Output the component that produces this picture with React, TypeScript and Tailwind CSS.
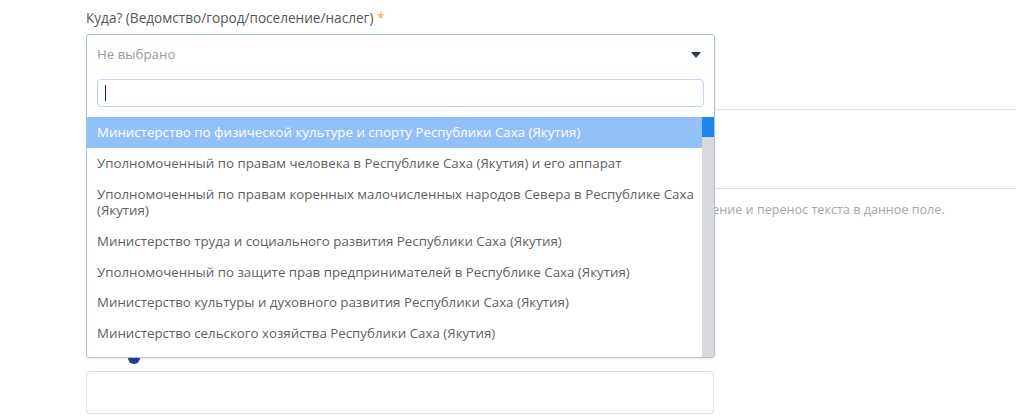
import { useState } from 'react';

const options = [
  'Министерство по физической культуре и спорту Республики Саха (Якутия)',
  'Уполномоченный по правам человека в Республике Саха (Якутия) и его аппарат',
  'Уполномоченный по правам коренных малочисленных народов Севера в Республике Саха (Якутия)',
  'Министерство труда и социального развития Республики Саха (Якутия)',
  'Уполномоченный по защите прав предпринимателей в Республике Саха (Якутия)',
  'Министерство культуры и духовного развития Республики Саха (Якутия)',
  'Министерство сельского хозяйства Республики Саха (Якутия)',
  'Министерство строительства Республики Саха (Якутия)',
];

export default function App() {
  const [active, setActive] = useState(0);

  return (
    <div className="relative w-[1016px] h-[419px] overflow-hidden bg-white font-['Open_Sans',sans-serif] text-[13.3px] text-[#666]">
      <div className="pl-[86px] pt-[8px]">
        <label className="block leading-5 text-[13.6px] text-[#555]">
          Куда? (Ведомство/город/поселение/наслег) <span className="text-[#f0a64a]">*</span>
        </label>
        <div className="mt-[6px] w-[628px] h-[40px] rounded-[3px] border border-[#d5dde5]" />
      </div>

      {/* content under the dropdown */}
      <div className="mt-[35px] ml-[86px] border-t border-[#e2e2e2]" />
      <div className="h-[78px]" />
      <div className="ml-[86px] border-t border-[#e2e2e2]" />
      <p className="pl-[86px] pt-[11px] text-[12.6px] leading-5 text-[#a6a6a6] whitespace-nowrap">
        Можно указать несколько адресов через запятую. Разрешено форматирование, копирование, выделение и перенос текста в данное поле.
      </p>
      <div className="mt-[132px] pl-[128px] h-[18px]">
        <div className="w-[12px] h-[12px] rounded-full bg-[#1d3f9a]" />
      </div>
      <div className="ml-[86px] mt-[1px] w-[628px] h-[43px] rounded-[3px] border border-[#e0e0e0]" />

      {/* open dropdown */}
      <div className="absolute left-[86px] top-[34px] w-[629px] rounded-[3px] border border-[#a7c2dd] bg-white shadow-[0_1px_3px_rgba(0,0,0,0.08)]">
        <div className="flex items-center justify-between h-[39px] pl-[10px] pr-[13px]">
          <span className="text-[#9a9a9a]">Не выбрано</span>
          <svg width="10" height="6" viewBox="0 0 10 6">
            <path d="M0 0 H10 L5 6 Z" fill="#2c3e50" />
          </svg>
        </div>
        <div className="px-[10px] pt-[5px] pb-[10px]">
          <div className="flex items-center h-[28px] rounded-[4px] border border-[#bcd6ef] pl-[7px]">
            <span className="w-[1px] h-[16px] bg-[#222]" />
          </div>
        </div>
        <div className="relative h-[240px] overflow-hidden">
          <ul className="pr-[12px]">
            {options.map((o, i) => (
              <li
                key={o}
                onMouseEnter={() => setActive(i)}
                className={`pl-[10px] pr-[4px] py-[7.4px] leading-4 ${i === active ? 'bg-[#92c0f8] text-white' : 'text-[#5f5f5f]'}`}
              >
                {o}
              </li>
            ))}
          </ul>
          <div className="absolute right-0 top-0 bottom-0 w-[12px] bg-[#d9d9d9]">
            <div className="h-[20px] bg-[#1e86e8]" />
          </div>
        </div>
      </div>
    </div>
  );
}
